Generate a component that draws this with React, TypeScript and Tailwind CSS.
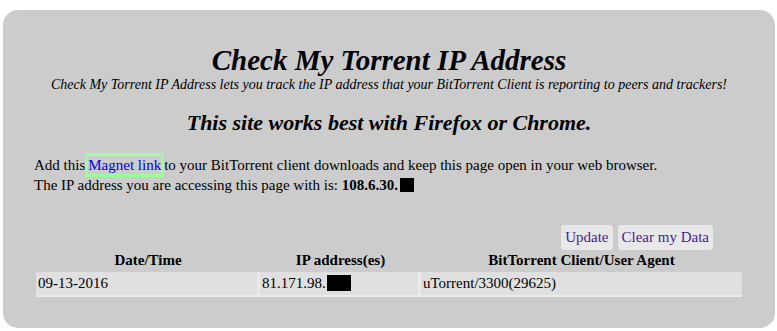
import React from 'react';

const rows = [{ date: '09-13-2016', ip: '81.171.98.', agent: 'uTorrent/3300(29625)' }];

export default function App() {
  return (
    <div className="bg-white w-[777px] h-[331px] pt-[10px] pl-[3px] pr-[2px] font-['Liberation_Serif',serif] text-black">
      {/* Main panel */}
      <div className="bg-[#cccccc] rounded-[15px] h-[318px] pt-[34px]">
        <h1 className="text-center text-[29px] leading-[33px] font-bold italic">Check My Torrent IP Address</h1>
        <p className="text-center text-[14px] leading-[16px] italic">
          Check My Torrent IP Address lets you track the IP address that your BitTorrent Client is reporting to peers and trackers!
        </p>
        <h2 className="text-center text-[22px] leading-[26px] font-bold italic mt-[17px]">
          This site works best with Firefox or Chrome.
        </h2>

        <div className="pl-[31px] mt-[19px] text-[15px] leading-[20px]">
          <p>
            Add this
            <a className="text-[#0000ee] border-[3px] border-[#99ff99] py-[1px]">Magnet link</a>
            to your BitTorrent client downloads and keep this page open in your web browser.
          </p>
          <p className="flex items-center">
            <span>The IP address you are accessing this page with is:&nbsp;</span>
            <b>108.6.30.</b>
            <span className="inline-block bg-black w-[14px] h-[14px] ml-[2px]" />
          </p>
        </div>

        {/* Actions */}
        <div className="flex justify-end gap-[5px] pr-[62px] mt-[30px] text-[15px]">
          <button className="bg-[#e8e8e8] text-[#4b1a9a] rounded-[3px] px-[4px] h-[25px]">Update</button>
          <button className="bg-[#e8e8e8] text-[#4b1a9a] rounded-[3px] px-[4px] h-[25px]">Clear my Data</button>
        </div>

        {/* History table */}
        <table className="ml-[33px] -mt-[1px] border-separate border-spacing-0 text-[15px]">
          <thead>
            <tr className="h-[21px]">
              <th className="w-[224px] font-bold">Date/Time</th>
              <th className="w-[161px] font-bold">IP address(es)</th>
              <th className="w-[321px] font-bold">BitTorrent Client/User Agent</th>
            </tr>
          </thead>
          <tbody>
            {rows.map((r) => (
              <tr key={r.date} className="h-[25px]">
                <td className="bg-[#e0e0e0] border-r-[3px] border-b-2 border-[#ebebeb] pl-[2px]">{r.date}</td>
                <td className="bg-[#e0e0e0] border-r-[3px] border-b-2 border-[#ebebeb] pl-[2px]">
                  <span className="flex items-center">
                    {r.ip}
                    <span className="inline-block bg-black w-[24px] h-[16px] ml-[1px]" />
                  </span>
                </td>
                <td className="bg-[#e0e0e0] border-b-2 border-[#ebebeb] pl-[2px]">{r.agent}</td>
              </tr>
            ))}
          </tbody>
        </table>
      </div>
    </div>
  );
}
